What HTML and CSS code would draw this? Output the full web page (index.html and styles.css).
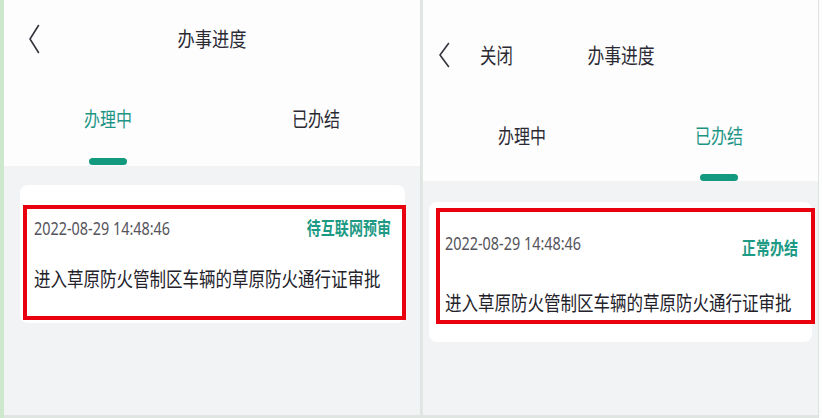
FILE: index.html
```html
<!DOCTYPE html>
<html lang="zh-CN">
<head>
<meta charset="utf-8">
<title>办事进度</title>
<link rel="stylesheet" href="styles.css">
</head>
<body>
<div class="page">
  <div class="edge-left"></div>
  <section class="phone phone-a">
    <header class="head head-a">
      <div class="nav nav-a">
        <svg class="back back-a" viewBox="0 0 12 30" width="12" height="30"><path d="M10.5 1.5 L2 15 L10.5 28.5" fill="none" stroke="#34343c" stroke-width="1.6" stroke-linecap="round" stroke-linejoin="round"/></svg>
        <h1 class="title title-a"><span class="sx">办事进度</span></h1>
      </div>
      <div class="tabs tabs-a">
        <div class="tab active"><span class="sx tab-label">办理中</span><i class="bar"></i></div>
        <div class="tab"><span class="sx tab-label">已办结</span><i class="bar"></i></div>
      </div>
    </header>
    <main class="body body-a">
      <div class="card card-a">
        <div class="mark mark-a">
          <div class="row">
            <span class="date sx">2022-08-29 14:48:46</span>
            <span class="status sx-r">待互联网预审</span>
          </div>
          <p class="name"><span class="sx">进入草原防火管制区车辆的草原防火通行证审批</span></p>
        </div>
      </div>
    </main>
  </section>
  <div class="divider"></div>
  <section class="phone phone-b">
    <header class="head head-b">
      <div class="nav nav-b">
        <svg class="back back-b" viewBox="0 0 12 26" width="12" height="26"><path d="M10.5 1.5 L2 13 L10.5 24.5" fill="none" stroke="#34343c" stroke-width="1.6" stroke-linecap="round" stroke-linejoin="round"/></svg>
        <span class="close sx">关闭</span>
        <h1 class="title title-b"><span class="sx">办事进度</span></h1>
      </div>
      <div class="tabs tabs-b">
        <div class="tab"><span class="sx tab-label">办理中</span><i class="bar"></i></div>
        <div class="tab active"><span class="sx tab-label">已办结</span><i class="bar"></i></div>
      </div>
    </header>
    <main class="body body-b">
      <div class="card card-b">
        <div class="mark mark-b">
          <div class="row">
            <span class="date sx">2022-08-29 14:48:46</span>
            <span class="status status-b sx-r">正常办结</span>
          </div>
          <p class="name"><span class="sx">进入草原防火管制区车辆的草原防火通行证审批</span></p>
        </div>
      </div>
    </main>
  </section>
  <div class="edge-right"></div>
</div>
</body>
</html>
```

FILE: styles.css
```css
* { box-sizing: border-box; margin: 0; padding: 0; }
html, body { width: 822px; height: 418px; overflow: hidden; background: #fff; }
body { font-family: "Noto Sans", "Noto Sans CJK SC", sans-serif; color: #2b2a33; }

.page { display: flex; width: 822px; height: 418px; }
.edge-left { width: 4px; background: #cde8cc; }
.divider { width: 2px; background: #dfe5e2; }
.edge-right { flex: 1; background: #fbfcfb; border-left: 1px solid #dde3e0; }

.phone { display: flex; flex-direction: column; height: 418px; overflow: hidden; background: #f2f3f5; border-bottom: 3px solid #dfe6e2; }
.phone-a { width: 416px; }
.phone-b { width: 396px; border-left: 1px solid #e3e8e5; }

.sx { display: inline-block; transform: scaleX(0.8); transform-origin: center; white-space: nowrap; }
.sx-r { display: inline-block; transform: scaleX(0.78); transform-origin: right center; white-space: nowrap; }

.head { background: #fdfdfe; display: flex; flex-direction: column; }
.head-a { height: 166px; }
.head-b { height: 181px; }

.nav { position: relative; display: flex; align-items: center; justify-content: center; }
.nav-a { height: 80px; }
.nav-b { height: 110px; }
.back { position: absolute; }
.back-a { left: 24px; top: 24px; }
.back-b { left: 15px; top: 42px; }
.close { position: absolute; left: 57px; top: 43px; font-size: 21px; line-height: 24px; transform: scaleX(0.78); transform-origin: left center; }
.title { font-weight: 400; font-size: 20px; line-height: 24px; }
.title-a .sx { transform: scaleX(0.86); }
.title-b { font-size: 21px; }
.title-b .sx { transform: scaleX(0.8); }

.tabs { display: flex; }
.tab { flex: 1; display: flex; flex-direction: column; align-items: center; font-size: 20px; line-height: 24px; color: #2b2a33; }
.tabs-a .tab { padding-top: 28px; }
.tabs-b .tab { padding-top: 15px; }
.tabs-b .tab:first-child { margin-right: 8px; }
.tabs-b .tab:last-child { margin-left: -8px; }
.tab .bar { display: block; width: 38px; height: 7px; border-radius: 4px; background: transparent; }
.tabs-a .bar { margin-top: 26px; }
.tabs-b .bar { margin-top: 25px; }
.tab.active { color: #1d9585; }
.tab.active .bar { background: #139a7e; }

.body { flex: 1; }
.card { background: #fff; border-radius: 8px; }
.card-a { margin: 19px 15px 0 16px; padding: 20px 0 3px 3px; }
.card-b { margin: 21px 6px 0 6px; padding: 6px 0 18px 7px; }

.mark { border: 4px solid #e8000f; background: #fff; }
.mark-a { height: 115px; margin-right: -1px; padding: 7px 11px 0 7px; }
.mark-b { height: 116px; margin-right: -3px; padding: 19px 13px 0 5px; }

.row { display: flex; justify-content: space-between; align-items: flex-start; }
.date { font-size: 18px; line-height: 24px; color: #55545c; transform: scaleX(0.8); transform-origin: left center; }
.status { font-size: 18px; line-height: 22px; margin-top: 1px; font-weight: 700; color: #1d9a84; }
.status-b { margin-top: 6px; }
.name { font-size: 20px; line-height: 26px; color: #23222a; }
.name .sx { transform: scaleX(0.825); transform-origin: left center; }
.mark-a .name { margin-top: 27px; }
.mark-b .name { margin-top: 32px; }
```
